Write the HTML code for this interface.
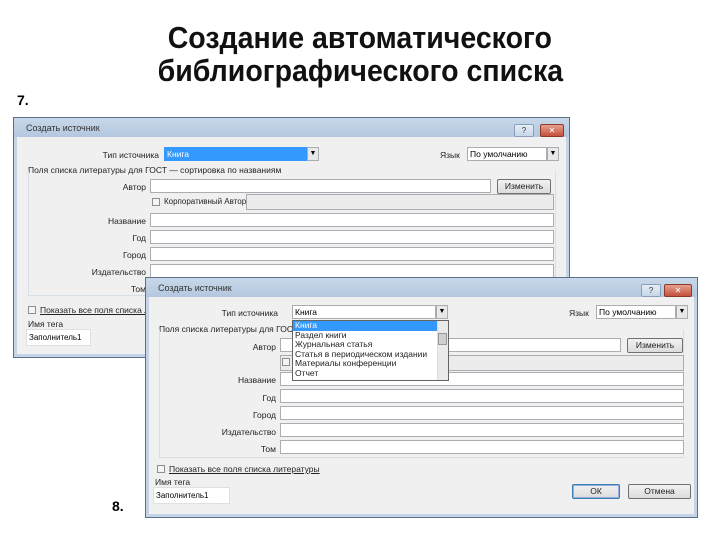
<!DOCTYPE html>
<html><head><meta charset="utf-8"><style>
*{margin:0;padding:0;box-sizing:border-box}
body{width:720px;height:540px;background:#fff;position:relative;overflow:hidden;font-family:"Liberation Sans","DejaVu Sans",sans-serif}
.a{position:absolute}
.h{position:absolute;left:0;width:720px;text-align:center;font-weight:bold;font-size:31px;color:#111}
.h span{display:inline-block;transform:scaleX(0.92)}
.dlg{position:absolute;background:#f0f0f0;border:1px solid #5a6f88;box-shadow:0 0 0 3px #c4d3e6 inset}
.tb{position:absolute;left:0;top:0;right:0;height:19px;background:linear-gradient(#c9d8ea,#b3c7de);font-size:9px;color:#333;padding:5px 0 0 12px}
.f{position:absolute;background:#fff;border:1px solid #abadb3;height:14px;font-size:8.5px;line-height:12px;padding-left:2px;white-space:nowrap}
.l{position:absolute;font-size:8.5px;color:#222;white-space:nowrap}
.r{text-align:right}
.btn{position:absolute;border:1px solid #707070;border-radius:2px;background:linear-gradient(#f2f2f2,#dcdcdc);font-size:8.5px;text-align:center;line-height:13px;color:#222}
.cb{position:absolute;width:8px;height:8px;border:1px solid #8e8f8f;background:#f4f4f4}
.ar{position:absolute;width:12px;height:14px;border:1px solid #abadb3;background:#e8e8e8;font-size:7px;text-align:center;line-height:12px}
.grp{position:absolute;border:1px solid #d5dfe5;border-top:none}
.hb{position:absolute;top:6px;height:13px;border:1px solid #8aa0ba;border-radius:2px;background:linear-gradient(#e5edf6,#c7d6e8);font-size:8px;text-align:center;line-height:11px;color:#334}
.xb{background:linear-gradient(#e8a090,#c4503a);color:#fff;font-weight:bold;border-color:#8b3a2a}
</style></head><body>
<div class="h" style="top:20px"><span>Создание автоматического</span></div>
<div class="h" style="top:53px"><span>библиографического списка</span></div>
<div class="a" style="left:17px;top:92px;font-weight:bold;font-size:14px">7.</div>
<div class="a" style="left:112px;top:498px;font-weight:bold;font-size:14px">8.</div>

<!-- Dialog 1 -->
<div class="dlg" style="left:13px;top:117px;width:557px;height:241px">
  <div class="tb">Создать источник</div>
  <div class="hb" style="left:500px;width:20px">?</div>
  <div class="hb xb" style="left:526px;width:24px">✕</div>
  <div class="l r" style="left:40px;width:105px;top:32px">Тип источника</div>
  <div class="f" style="left:150px;top:29px;width:145px;background:#3399ff;border-color:#3399ff;color:#fff">Книга</div>
  <div class="ar" style="left:293px;top:29px">▼</div>
  <div class="l" style="left:426px;top:32px">Язык</div>
  <div class="f" style="left:453px;top:29px;width:80px">По умолчанию</div>
  <div class="ar" style="left:533px;top:29px">▼</div>
  <div class="l" style="left:14px;top:47px">Поля списка литературы для ГОСТ — сортировка по названиям</div>
  <div class="grp" style="left:14px;top:53px;width:528px;height:125px"></div>
  <div class="l r" style="left:60px;width:72px;top:64px">Автор</div>
  <div class="f" style="left:136px;top:61px;width:341px"></div>
  <div class="btn" style="left:483px;top:61px;width:54px">Изменить</div>
  <div class="cb" style="left:138px;top:80px"></div>
  <div class="l" style="left:150px;top:79px;font-size:8px">Корпоративный Автор</div>
  <div class="f" style="left:232px;top:76px;width:308px;height:16px;background:#ececec"></div>
  <div class="l r" style="left:60px;width:72px;top:98px">Название</div>
  <div class="f" style="left:136px;top:95px;width:404px"></div>
  <div class="l r" style="left:60px;width:72px;top:115px">Год</div>
  <div class="f" style="left:136px;top:112px;width:404px"></div>
  <div class="l r" style="left:60px;width:72px;top:132px">Город</div>
  <div class="f" style="left:136px;top:129px;width:404px"></div>
  <div class="l r" style="left:40px;width:92px;top:149px">Издательство</div>
  <div class="f" style="left:136px;top:146px;width:404px"></div>
  <div class="l r" style="left:60px;width:72px;top:166px">Том</div>
  <div class="cb" style="left:14px;top:188px"></div>
  <div class="l" style="left:26px;top:187px;text-decoration:underline">Показать все поля списка литературы</div>
  <div class="l" style="left:14px;top:201px">Имя тега</div>
  <div class="f" style="left:12px;top:211px;width:65px;height:17px;border-color:#e0e0e0;font-size:8px;line-height:15px">Заполнитель1</div>
</div>

<!-- Dialog 2 -->
<div class="dlg" style="left:145px;top:277px;width:553px;height:241px">
  <div class="tb">Создать источник</div>
  <div class="hb" style="left:495px;width:20px">?</div>
  <div class="hb xb" style="left:518px;width:28px">✕</div>
  <div class="l r" style="left:30px;width:102px;top:30px">Тип источника</div>
  <div class="f" style="left:146px;top:27px;width:144px">Книга</div>
  <div class="ar" style="left:290px;top:27px">▼</div>
  <div class="l" style="left:423px;top:30px">Язык</div>
  <div class="f" style="left:450px;top:27px;width:80px">По умолчанию</div>
  <div class="ar" style="left:530px;top:27px">▼</div>
  <div class="l" style="left:13px;top:46px">Поля списка литературы для ГОСТ</div>
  <div class="grp" style="left:13px;top:52px;width:525px;height:128px"></div>
  <div class="l r" style="left:60px;width:70px;top:64px">Автор</div>
  <div class="f" style="left:134px;top:60px;width:341px"></div>
  <div class="btn" style="left:481px;top:60px;width:56px">Изменить</div>
  <div class="f" style="left:134px;top:77px;width:404px;height:16px;background:#ececec"></div>
  <div class="cb" style="left:136px;top:80px"></div>
  <div class="l r" style="left:40px;width:90px;top:97px">Название</div>
  <div class="f" style="left:134px;top:94px;width:404px"></div>
  <div class="l r" style="left:40px;width:90px;top:115px">Год</div>
  <div class="f" style="left:134px;top:111px;width:404px"></div>
  <div class="l r" style="left:40px;width:90px;top:132px">Город</div>
  <div class="f" style="left:134px;top:128px;width:404px"></div>
  <div class="l r" style="left:30px;width:100px;top:149px">Издательство</div>
  <div class="f" style="left:134px;top:145px;width:404px"></div>
  <div class="l r" style="left:40px;width:90px;top:166px">Том</div>
  <div class="f" style="left:134px;top:162px;width:404px"></div>
  <div class="a" style="left:146px;top:42px;width:157px;height:61px;background:#fff;border:1px solid #646464;font-size:8.5px;line-height:9.6px;color:#222">
    <div style="background:#3399ff;color:#fff;width:144px;padding-left:2px">Книга</div>
    <div style="padding-left:2px">Раздел книги</div>
    <div style="padding-left:2px">Журнальная статья</div>
    <div style="padding-left:2px">Статья в периодическом издании</div>
    <div style="padding-left:2px">Материалы конференции</div>
    <div style="padding-left:2px">Отчет</div>
    <div class="a" style="left:144px;top:0;width:11px;height:59px;background:#eaeaea;border-left:1px solid #ddd"></div>
    <div class="a" style="left:145px;top:12px;width:9px;height:12px;background:#cfcfcf;border:1px solid #999"></div>
  </div>
  <div class="cb" style="left:11px;top:187px"></div>
  <div class="l" style="left:23px;top:186px;text-decoration:underline">Показать все поля списка литературы</div>
  <div class="l" style="left:9px;top:199px">Имя тега</div>
  <div class="f" style="left:7px;top:209px;width:77px;height:17px;border-color:#e0e0e0;font-size:8px;line-height:15px">Заполнитель1</div>
  <div class="btn" style="left:426px;top:206px;width:48px;border-color:#3c7fb1;box-shadow:0 0 0 1px #9ad inset">ОК</div>
  <div class="btn" style="left:482px;top:206px;width:63px">Отмена</div>
</div>
</body></html>
